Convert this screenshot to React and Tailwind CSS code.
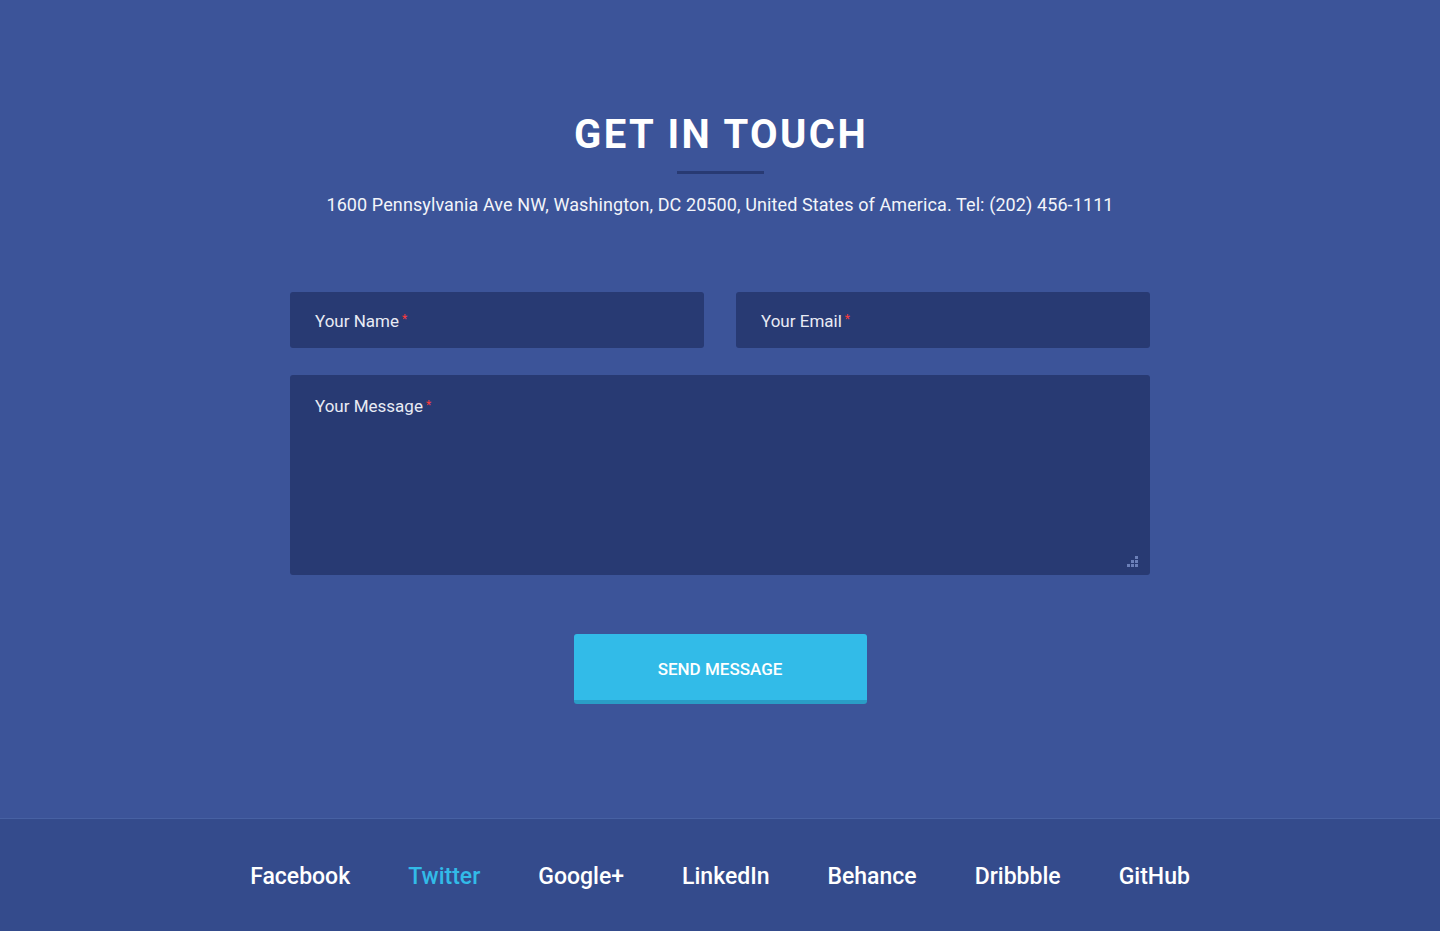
export default function App() {
  const links = ["Facebook", "Twitter", "Google+", "LinkedIn", "Behance", "Dribbble", "GitHub"];
  return (
    <div className="min-h-[931px] flex flex-col bg-[#3c5499] text-white" style={{ fontFamily: "Roboto, 'Noto Sans', sans-serif" }}>
      <section className="h-[818px] flex flex-col items-center pt-[113px]">
        <h1 className="text-[40px] leading-[44px] font-bold tracking-[2.4px] pl-[2px]">GET IN TOUCH</h1>
        <div className="w-[87px] h-[3px] bg-[#283a73] mt-[14px]"></div>
        <p className="mt-[19px] text-[18px] leading-[24px] tracking-[0.1px] text-[#f3f5fa]">
          1600 Pennsylvania Ave NW, Washington, DC 20500, United States of America. Tel: (202) 456-1111
        </p>
        <form className="mt-[75px] w-[860px] flex flex-col gap-[27px]">
          <div className="flex gap-[32px]">
            <div className="flex-1 h-[56px] bg-[#283a73] rounded-[3px] flex items-center px-[25px] pt-[3px] text-[17px] text-[#e8ebf4]">
              Your Name<span className="text-[#ff3b3b] text-[12px] ml-[3px] -mt-[5px]">*</span>
            </div>
            <div className="flex-1 h-[56px] bg-[#283a73] rounded-[3px] flex items-center px-[25px] pt-[3px] text-[17px] text-[#e8ebf4]">
              Your Email<span className="text-[#ff3b3b] text-[12px] ml-[3px] -mt-[5px]">*</span>
            </div>
          </div>
          <div className="relative h-[200px] bg-[#283a73] rounded-[3px] px-[25px] pt-[19px] text-[17px] text-[#e8ebf4]">
            <div className="flex items-start">Your Message<span className="text-[#ff3b3b] text-[12px] ml-[3px] mt-[2px]">*</span></div>
            <svg className="absolute right-[12px] bottom-[8px]" width="11" height="11" viewBox="0 0 11 11" fill="#6b7fb8">
              <rect x="8" y="0" width="3" height="3" />
              <rect x="4" y="4" width="3" height="3" />
              <rect x="8" y="4" width="3" height="3" />
              <rect x="0" y="8" width="3" height="3" />
              <rect x="4" y="8" width="3" height="3" />
              <rect x="8" y="8" width="3" height="3" />
            </svg>
          </div>
          <div className="flex justify-center mt-[32px]">
            <button type="button" className="w-[293px] h-[70px] bg-[#32bbe8] border-b-[4px] border-[#2a9ec6] rounded-[3px] text-[17px] font-medium text-white pt-[5px]">
              SEND MESSAGE
            </button>
          </div>
        </form>
      </section>
      <footer className="h-[113px] bg-[#344b8c] border-t border-[#4761a3] flex items-center justify-center gap-[58px] pt-[5px]">
        {links.map((l) => (
          <a key={l} href="#" className={"text-[23px] font-medium " + (l === "Twitter" ? "text-[#32bbe8]" : "text-white")}>{l}</a>
        ))}
      </footer>
    </div>
  );
}
